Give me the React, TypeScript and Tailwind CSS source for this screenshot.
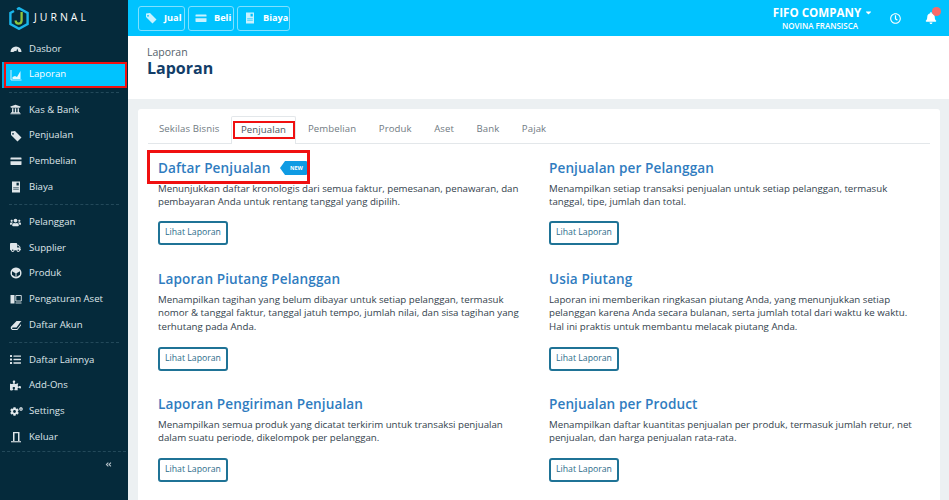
import React from "react";
import { FaUniversity, FaUsers, FaTruck, FaList, FaPuzzlePiece, FaCog, FaAngleDoubleLeft, FaBell, FaRegClock, FaCaretDown } from "react-icons/fa";

const font = "font-['Open_Sans','Liberation_Sans',sans-serif]";

function Logo() {
  return (
    <svg width="20" height="23" viewBox="0 0 20 23" className="shrink-0">
      <path d="M8 2.2 L10 1.2 L18.6 6 V17 L10 21.8 L1.4 17 V6 L5 4" fill="none" stroke="#19b5ea" strokeWidth="2.4" />
      <path d="M12.6 5 V13.5 Q12.6 16.6 9.6 16.6 Q6.8 16.6 6.6 13.5" fill="none" stroke="#8cc63f" strokeWidth="2.3" />
    </svg>
  );
}

const S = ({ children, w = 12 }: { children: React.ReactNode; w?: number }) => (
  <svg width={w} height={w} viewBox="0 0 12 12" fill="currentColor">{children}</svg>
);
const Gauge = () => <S><path d="M0.5 9 A5.5 5.5 0 0 1 11.5 9 L8.6 9 L7.2 5.6 L6.4 8.2 A2.6 2.6 0 0 0 3.4 9 Z" /></S>;
const Chart = () => (
  <S><path d="M1 1 V11 H11.5" fill="none" stroke="currentColor" strokeWidth="0.9" /><path d="M2.5 10 V8 L5 7 L7 8 L10.5 2 V10 Z" /></S>
);
const Tag = () => <S><path fillRule="evenodd" d="M1 1.5 L5 1 L11.5 7.5 L7.5 11.5 L1 5 Z M3 3 a0.8 0.8 0 1 0 0.01 0 Z" /></S>;
const Card = () => <S><path fillRule="evenodd" d="M1 2.5 H11 A0.6 0.6 0 0 1 11.5 3 V9.5 A0.6 0.6 0 0 1 11 10 H1 A0.6 0.6 0 0 1 0.5 9.5 V3 A0.6 0.6 0 0 1 1 2.5 Z M0.5 4.6 V6.2 H11.5 V4.6 Z" /></S>;
const Bill = () => (
  <S><path fillRule="evenodd" d="M2 0.5 H10 V11.5 H2 Z M3.2 6.6 V7.3 H8.8 V6.6 Z M3.2 8.4 V9.1 H8.8 V8.4 Z M6.5 1.8 V4.6 H8.8 V1.8 Z" /></S>
);
const Cube = () => (
  <S><path fillRule="evenodd" d="M6 0.5 A5.5 5.5 0 1 1 5.99 0.5 Z M5.5 6.3 L2 4.2 V7.8 L5.5 9.9 Z M6.5 6.3 V9.9 L10 7.8 V4.2 Z" /></S>
);
const Asset = () => (
  <S><path d="M0.5 2 H4.5 V10.5 H0.5 Z" /><path d="M5.8 2.5 H11.3 V8 H5.8 Z M5.5 10 H11.5" fill="none" stroke="currentColor" strokeWidth="0.9" /></S>
);
const BookI = () => (
  <S><path d="M0.8 8 L6.5 2 H11.5 L10.5 3 L6.5 8.5 H2.5 Q1.6 9.3 2.5 10 H7 L11 5 V6.5 L7.3 11 H2.2 Q0.2 10 0.8 8 Z" /></S>
);
const Gears = () => (
  <span className="relative inline-block w-[12px] h-[12px]">
    <FaCog className="absolute left-0 top-[2px] text-[9px]" />
    <FaCog className="absolute left-[9px] top-[2px] text-[4px]" />
  </span>
);
const Door = () => (
  <S><path d="M3 1 H9.5 V10 H8 V2.2 H4.5 V10 H3 Z" /><path d="M1 10.2 H11 V11.3 H1 Z" /></S>
);

function NavItem({ icon, label, active }: { icon: React.ReactNode; label: string; active?: boolean }) {
  if (active) {
    return (
      <div className="h-[26px] ml-[2px] mr-px border-l-2 border-[#00a8e0]">
        <div className="h-full flex items-center bg-[#00c3ff] border-2 border-[#f01010] pl-[4px] text-white text-[9.6px]">
          <span className="w-[19px] flex justify-start text-[#e6f9ff]">{icon}</span>
          <span>{label}</span>
        </div>
      </div>
    );
  }
  return (
    <div className="h-[25.7px] flex items-center pl-[10px] text-[#dfe6ea] text-[9.6px]">
      <span className="w-[19px] flex justify-start text-[#dfe6ea] text-[11px]">{icon}</span>
      <span>{label}</span>
    </div>
  );
}

function Divider() {
  return <div className="border-t border-dashed border-[#23495a] mx-[9px] my-[4.2px]" />;
}

function TopButton({ icon, label, w }: { icon: React.ReactNode; label: string; w: string }) {
  return (
    <div className={`${w} h-[25px] flex items-center gap-[7px] pl-[6px] border border-[#7fe0ff] rounded-[3px] text-white text-[9.2px] font-bold`}>
      <span className="text-[#c9f2ff]">{icon}</span>
      {label}
    </div>
  );
}

function Report({ title, desc, badge, className }: { title: string; desc: React.ReactNode; badge?: boolean; className: string }) {
  return (
    <div className={className}>
      <div className="relative h-[20px] flex items-center">
        <h3 className="text-[13.6px] font-semibold text-[#2f7cc0] leading-none tracking-[0.1px]">{title}</h3>
        {badge && (
          <>
            <span className="relative ml-[15px] h-[14px] w-[22px] bg-[#0f9be3] rounded-r-[1px] text-white text-[5.5px] font-bold flex items-center justify-center">
              <span className="absolute left-[-5px] top-0 w-0 h-0 border-y-[7px] border-y-transparent border-r-[5px] border-r-[#0f9be3]" />
              NEW
            </span>
            <span className="absolute left-[-11px] top-[-8px] w-[163px] h-[34px] border-[3px] border-[#f01010]" />
          </>
        )}
      </div>
      <p className="mt-[4px] text-[9.7px] leading-[13.3px] text-[#33424d]">{desc}</p>
    </div>
  );
}

function Btn() {
  return (
    <div className="w-[70px] h-[24px] flex items-center justify-center border-2 border-[#1f7396] rounded-[3px] text-[#2c6c8a] text-[8.7px]">
      Lihat Laporan
    </div>
  );
}

export default function App() {
  const tabs = ["Pembelian", "Produk", "Aset", "Bank", "Pajak"];
  return (
    <div className={`flex w-[949px] h-[500px] overflow-hidden bg-[#ecf0f2] ${font}`}>
      <aside className="w-[128px] shrink-0 bg-[#052a3b] flex flex-col">
        <div className="h-[35px] flex items-center pl-[9px] gap-[5px] pt-[1px] shrink-0">
          <Logo />
          <span className="text-white text-[10.5px] tracking-[3px] font-normal">JURNAL</span>
        </div>
        <div className="h-px" />
        <NavItem icon={<Gauge />} label="Dasbor" />
        <NavItem active icon={<Chart />} label="Laporan" />
        <Divider />
        <NavItem icon={<FaUniversity />} label="Kas & Bank" />
        <NavItem icon={<Tag />} label="Penjualan" />
        <NavItem icon={<Card />} label="Pembelian" />
        <NavItem icon={<Bill />} label="Biaya" />
        <Divider />
        <NavItem icon={<FaUsers />} label="Pelanggan" />
        <NavItem icon={<FaTruck />} label="Supplier" />
        <NavItem icon={<Cube />} label="Produk" />
        <NavItem icon={<Asset />} label="Pengaturan Aset" />
        <NavItem icon={<BookI />} label="Daftar Akun" />
        <Divider />
        <NavItem icon={<FaList />} label="Daftar Lainnya" />
        <NavItem icon={<FaPuzzlePiece />} label="Add-Ons" />
        <NavItem icon={<Gears />} label="Settings" />
        <NavItem icon={<Door />} label="Keluar" />
        <div className="border-t border-dashed border-[#23495a] mx-[2px] mt-px" />
        <div className="flex justify-end pr-[16px] pt-[9px] text-[#b8c4cb] text-[7px]"><FaAngleDoubleLeft /></div>
      </aside>

      <main className="flex-1 min-w-0 flex flex-col">
        <header className="h-[36px] shrink-0 bg-[#00c3ff] flex items-center pl-[10px] gap-[3px]">
          <TopButton w="w-[47px]" icon={<Tag />} label="Jual" />
          <TopButton w="w-[46px]" icon={<Card />} label="Beli" />
          <TopButton w="w-[53px]" icon={<Bill />} label="Biaya" />
          <div className="ml-auto flex flex-col items-center text-white mr-[17px] w-[94px]">
            <div className="flex items-center gap-[3px] text-[11.6px] font-bold leading-[14px] whitespace-nowrap">FIFO COMPANY <FaCaretDown className="text-[9px]" /></div>
            <div className="text-[8px] font-semibold leading-[11px] whitespace-nowrap pr-[6px]">NOVINA FRANSISCA</div>
          </div>
          <FaRegClock className="text-white text-[11px] mr-[21px]" />
          <div className="relative mr-[12px] text-white text-[12px]">
            <FaBell />
            <span className="absolute top-[-5px] right-[-4px] w-[9px] h-[9px] rounded-full bg-[#f96a6a]" />
          </div>
        </header>
        <section className="h-[63px] shrink-0 bg-white pl-[19px] pt-[10px]">
          <div className="text-[10.5px] leading-[12px] text-[#55616b]">Laporan</div>
          <h1 className="mt-px text-[16px] leading-[18px] font-bold text-[#123d68]">Laporan</h1>
        </section>
        <section className="ml-[10px] mr-[9px] mt-[10px] flex-1 min-h-0 overflow-hidden bg-white rounded-t-[3px] px-[10px] pt-[7px]">
          <div className="flex h-[28px] border-b border-[#e3e7ea] text-[9.6px] tracking-[0.1px] text-[#707a82]">
            <div className="w-[83px] pl-[11px] flex items-center">Sekilas Bisnis</div>
            <div className="relative w-[65px] flex items-center justify-center bg-white border border-b-0 border-[#e3e7ea] h-[28px] text-[#4a5660] rounded-t-[2px]">
              Penjualan
              <span className="absolute left-[1px] top-[4px] w-[62px] h-[18px] border-[2px] border-[#f01010]" />
            </div>
            {tabs.map((t) => (
              <div key={t} className="flex items-center pl-[12px] pr-[10.5px]">{t}</div>
            ))}
          </div>
          <div className="grid grid-cols-[391px_1fr] pl-[10px] pr-[10px] pt-[14px]">
            <div>
              <Report className="h-[63px]" badge title="Daftar Penjualan" desc={<>Menunjukkan daftar kronologis dari semua faktur, pemesanan, penawaran, dan<br />pembayaran Anda untuk rentang tanggal yang dipilih.</>} />
              <Btn />
            </div>
            <div>
              <Report className="h-[63px]" title="Penjualan per Pelanggan" desc={<>Menampilkan setiap transaksi penjualan untuk setiap pelanggan, termasuk<br />tanggal, tipe, jumlah dan total.</>} />
              <Btn />
            </div>
            <div className="pt-[24px]">
              <Report className="h-[78px]" title="Laporan Piutang Pelanggan" desc={<>Menampilkan tagihan yang belum dibayar untuk setiap pelanggan, termasuk<br />nomor & tanggal faktur, tanggal jatuh tempo, jumlah nilai, dan sisa tagihan yang<br />terhutang pada Anda.</>} />
              <Btn />
            </div>
            <div className="pt-[24px]">
              <Report className="h-[78px]" title="Usia Piutang" desc={<>Laporan ini memberikan ringkasan piutang Anda, yang menunjukkan setiap<br />pelanggan karena Anda secara bulanan, serta jumlah total dari waktu ke waktu.<br />Hal ini praktis untuk membantu melacak piutang Anda.</>} />
              <Btn />
            </div>
            <div className="pt-[23px]">
              <Report className="h-[64px]" title="Laporan Pengiriman Penjualan" desc={<>Menampilkan semua produk yang dicatat terkirim untuk transaksi penjualan<br />dalam suatu periode, dikelompok per pelanggan.</>} />
              <Btn />
            </div>
            <div className="pt-[23px]">
              <Report className="h-[64px]" title="Penjualan per Product" desc={<>Menampilkan daftar kuantitas penjualan per produk, termasuk jumlah retur, net<br />penjualan, dan harga penjualan rata-rata.</>} />
              <Btn />
            </div>
          </div>
        </section>
      </main>
    </div>
  );
}
